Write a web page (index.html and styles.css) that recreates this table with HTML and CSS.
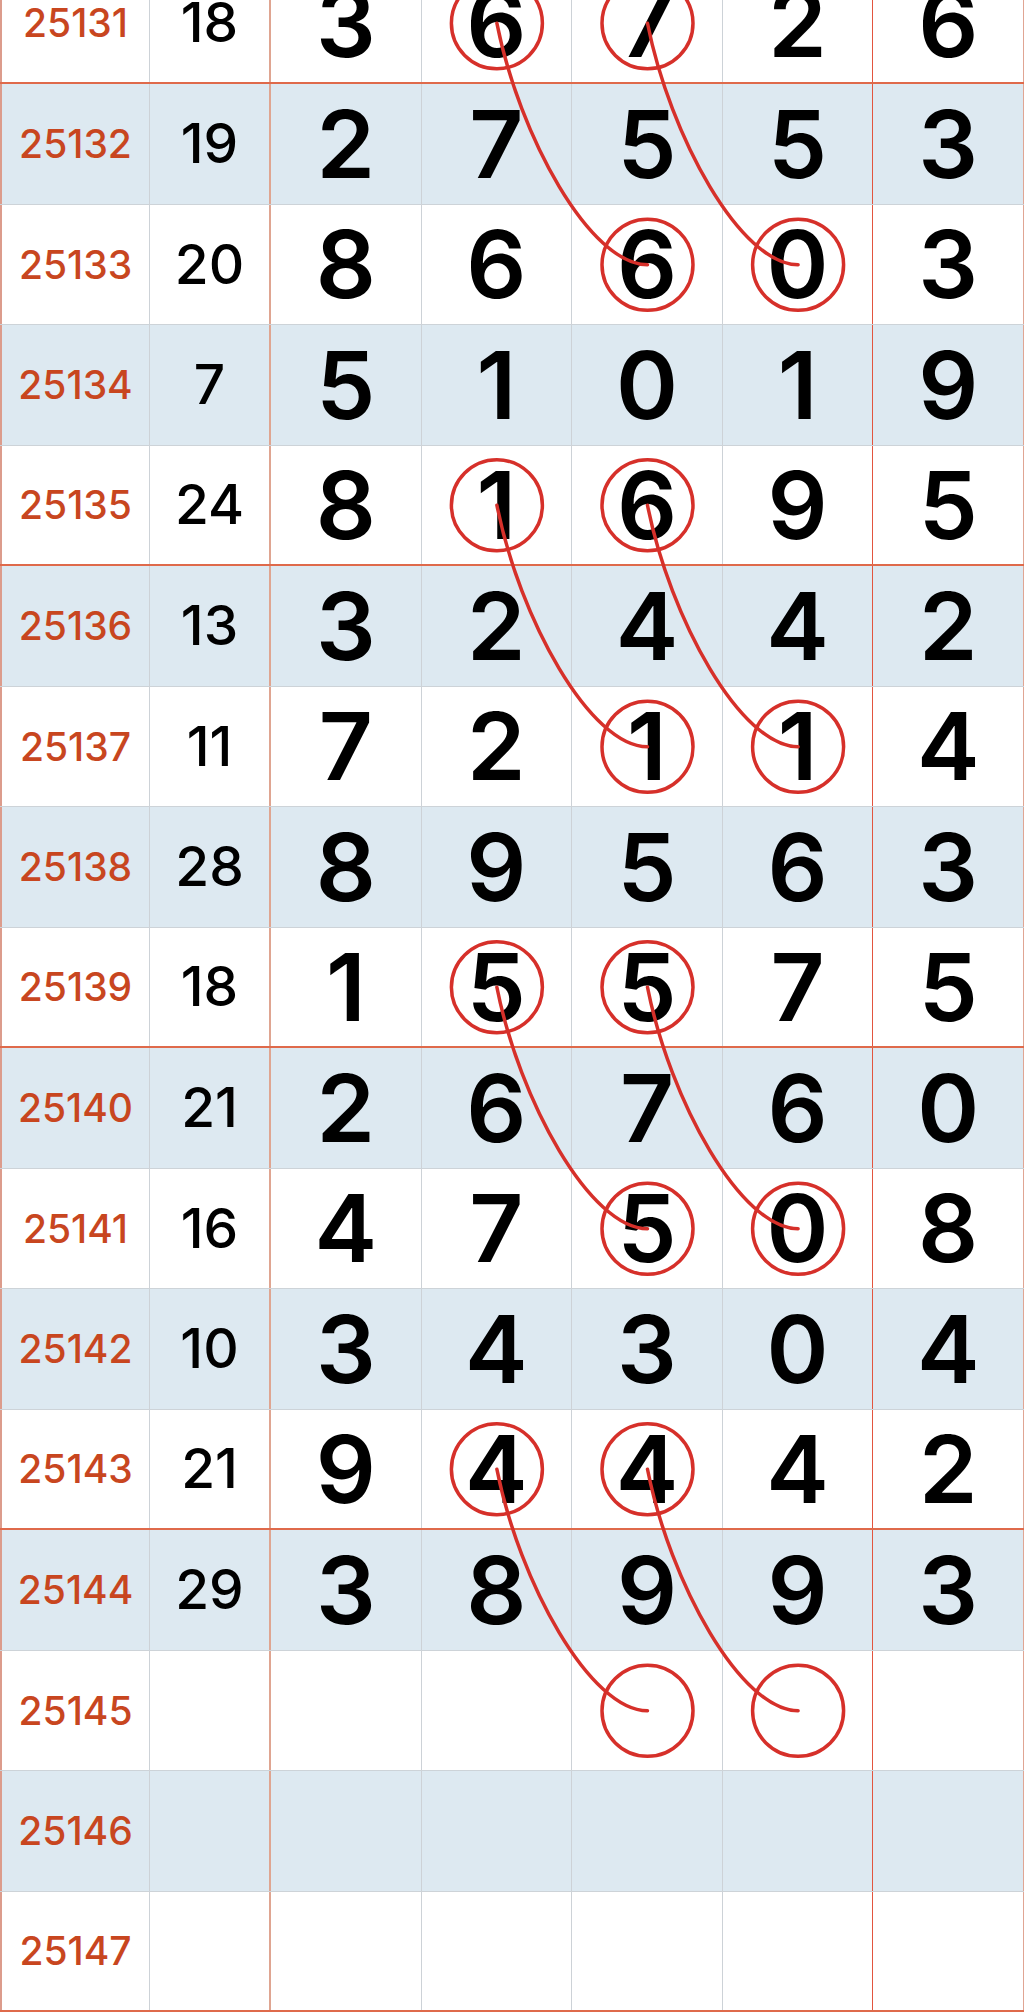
FILE: index.html
```html
<!DOCTYPE html>
<html lang="zh-CN">
<head>
    <meta charset="UTF-8">
    <meta name="viewport" content="width=device-width, initial-scale=1.0">
    <title>走势图</title>
    <link rel="stylesheet" href="styles.css">
</head>
<body>
    <div class="sheet" id="sheet">
        <div class="chart" id="chart"></div>
        <svg class="marks" id="marks" xmlns="http://www.w3.org/2000/svg"></svg>
    </div>

    <script>
        const draws = [
            ['25131', '18', '36726'],
            ['25132', '19', '27553'],
            ['25133', '20', '86603'],
            ['25134', '7', '51019'],
            ['25135', '24', '81695'],
            ['25136', '13', '32442'],
            ['25137', '11', '72114'],
            ['25138', '28', '89563'],
            ['25139', '18', '15575'],
            ['25140', '21', '26760'],
            ['25141', '16', '47508'],
            ['25142', '10', '34304'],
            ['25143', '21', '94442'],
            ['25144', '29', '38993'],
            ['25145', '', ''],
            ['25146', '', ''],
            ['25147', '', '']
        ];

        // circled cells: [row, column], column 0 = issue number
        const links = [
            [[0, 3], [2, 4]], [[0, 4], [2, 5]],
            [[4, 3], [6, 4]], [[4, 4], [6, 5]],
            [[8, 3], [10, 4]], [[8, 4], [10, 5]],
            [[12, 3], [14, 4]], [[12, 4], [14, 5]]
        ];

        function buildChart() {
            const chart = document.getElementById('chart');

            draws.forEach((draw, index) => {
                const row = document.createElement('div');
                row.className = 'row';
                if (index % 2 === 1) row.classList.add('alt');
                if (index % 4 === 0) row.classList.add('group-end');

                const digits = draw[2] ? draw[2].split('') : ['', '', '', '', ''];
                row.innerHTML = `
                    <div class="cell issue">${draw[0]}</div>
                    <div class="cell sum">${draw[1]}</div>
                    ${digits.map(d => `<div class="cell num">${d}</div>`).join('')}
                `;
                chart.appendChild(row);
            });
        }

        function cellCenter(r, c) {
            const sheet = document.getElementById('sheet').getBoundingClientRect();
            const cell = document.getElementById('chart').children[r].children[c].getBoundingClientRect();
            return {
                x: cell.left - sheet.left + cell.width / 2,
                y: cell.top - sheet.top + cell.height / 2
            };
        }

        function drawMarks() {
            const svg = document.getElementById('marks');
            const sheet = document.getElementById('sheet');
            svg.setAttribute('width', sheet.offsetWidth);
            svg.setAttribute('height', sheet.offsetHeight);

            let html = '';
            links.forEach(([from, to]) => {
                const a = cellCenter(from[0], from[1]);
                const b = cellCenter(to[0], to[1]);
                const dx = b.x - a.x;
                const dy = b.y - a.y;
                html += `<circle cx="${a.x}" cy="${a.y}" r="45.5"/>`;
                html += `<circle cx="${b.x}" cy="${b.y}" r="45.5"/>`;
                html += `<path d="M${a.x} ${a.y} C${a.x + dx * 0.15} ${a.y + dy * 0.47} ${b.x - dx * 0.38} ${b.y} ${b.x} ${b.y}"/>`;
            });
            svg.innerHTML = html;
        }

        buildChart();
        drawMarks();
    </script>
</body>
</html>
```

FILE: styles.css
```css
body {
    margin: 0;
    background: #ffffff;
    font-family: Inter, "Noto Sans", "Noto Sans CJK SC", sans-serif;
    overflow: hidden;
}

.sheet {
    position: relative;
    margin-top: -36.5px;
}

.row {
    display: grid;
    grid-template-columns: 150px 121px repeat(5, 1fr);
    height: 120.5px;
    box-sizing: border-box;
    border-bottom: 1px solid #cdd3d8;
    background: #ffffff;
}

.row.alt {
    background: #dde9f1;
}

.row.group-end {
    border-bottom: 2px solid #df6a4b;
}

.cell {
    display: flex;
    align-items: center;
    justify-content: center;
    line-height: 1;
    font-weight: 600;
    color: #000000;
    border-right: 1px solid #cdd2d7;
}

.issue {
    color: #c8461f;
    font-size: 39px;
    font-weight: 500;
    border-left: 2px solid #dc9c8c;
}

.sum {
    font-size: 55px;
    font-weight: 500;
    border-right: 2px solid #dfa591;
}

.num {
    font-size: 94px;
}

.num:nth-child(6) {
    border-right: 1px solid #e2553f;
}

.num:last-child {
    border-right: 1px solid #e0a593;
}

.marks {
    position: absolute;
    top: 0;
    left: 0;
    pointer-events: none;
    fill: none;
    stroke: #d6302a;
    stroke-width: 3.5;
    stroke-linecap: round;
}
```
